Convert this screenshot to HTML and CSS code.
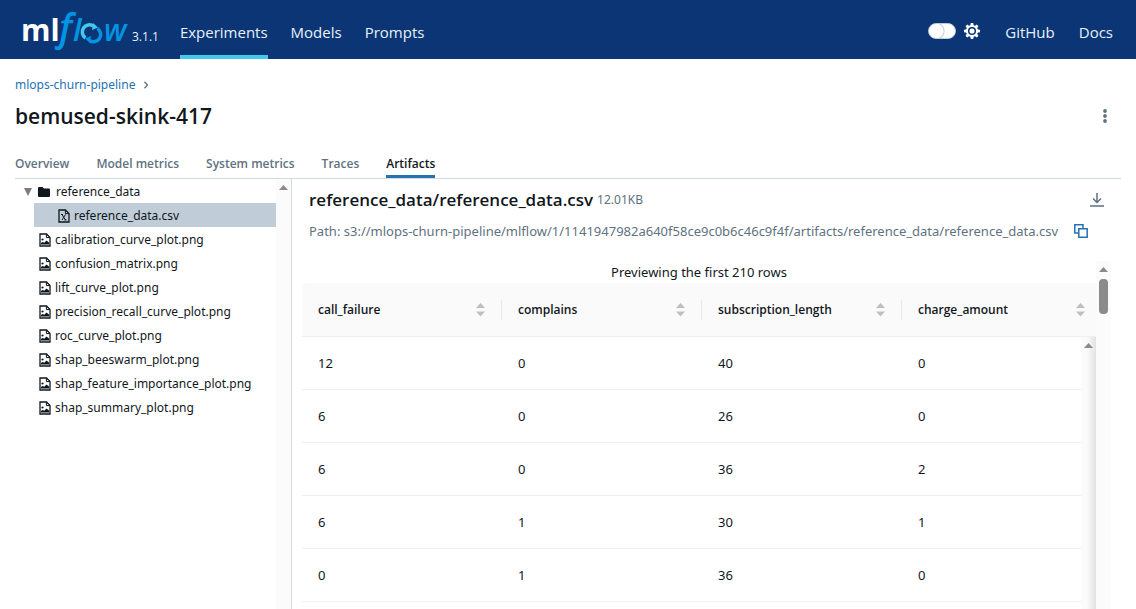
FILE: index.html
```html
<!DOCTYPE html>
<html lang="en">
<head>
<meta charset="utf-8">
<meta name="viewport" content="width=device-width, initial-scale=1">
<title>bemused-skink-417 - MLflow</title>
<link rel="stylesheet" href="styles.css">
</head>
<body>
<svg class="defs" aria-hidden="true">
  <symbol id="image-file" viewBox="0 0 12 14">
    <path d="M1 1h6.500L11 4.500V13H1z" fill="none" stroke="currentColor" stroke-width="1.300"/>
    <path d="M7.400 1v3.600h3.600" fill="none" stroke="currentColor"/>
    <path d="M2 11.500V9.800l2-.8 1.200.8L7.500 7.500 10 9.500v2z" fill="currentColor"/>
    <circle cx="3.500" cy="6.500" r="1.100" fill="currentColor"/>
  </symbol>
  <symbol id="sorter" viewBox="0 0 9 14">
    <path d="M4.500 0 9 5H0zM4.500 13.500 0 8.500h9z" fill="#bfbfbf"/>
  </symbol>
  <symbol id="scroll-up" viewBox="0 0 9 5">
    <path d="M4.500 0 9 5H0z" fill="#8b8b8b"/>
  </symbol>
</svg>
<div class="app">
  <header class="topbar">
    <a class="brand" href="#" aria-label="mlflow">
      <svg class="logo" viewBox="0 0 106 48">
        <text class="logo-ml" x="-2" y="35">ml</text>
        <text class="logo-flow logo-f" x="36" y="35">f</text>
        <text class="logo-flow" x="50" y="35">l</text>
        <text class="logo-flow logo-w" x="81" y="35">w</text>
        <g fill="none" stroke-width="3.500">
          <path d="M62.500 32a7 7 0 0 1 8-12" stroke="#43c9ed"/>
          <path d="M74.500 22.500a7 7 0 0 1-8 12" stroke="#0194e2"/>
        </g>
        <path d="m70 17 5 4.500-6 2.500z" fill="#43c9ed"/>
        <path d="m67 37-5-4.500 6-2.500z" fill="#0194e2"/>
      </svg>
    </a>
    <span class="version">3.1.1</span>
    <nav class="nav">
      <a class="active" href="#">Experiments</a>
      <a href="#">Models</a>
      <a href="#">Prompts</a>
    </nav>
    <div class="theme">
      <input type="checkbox" class="switch" id="theme" aria-label="Dark theme">
      <label for="theme"><svg class="gear" viewBox="0 0 16 16">
        <g fill="#fff">
          <circle cx="8" cy="8" r="6"/>
          <g id="teeth"><path d="M6.800 0h2.400l.6 3H6.200zM6.800 16h2.400l.6-3H6.200z"/></g>
          <use href="#teeth" transform="rotate(45 8 8)"/>
          <use href="#teeth" transform="rotate(90 8 8)"/>
          <use href="#teeth" transform="rotate(135 8 8)"/>
        </g>
        <circle cx="8" cy="8" r="3.300" fill="#fff" stroke="#0b3574" stroke-width="1.500"/>
      </svg></label>
    </div>
    <nav class="links"><a href="#">GitHub</a><a href="#">Docs</a></nav>
  </header>
  <main class="page">
    <nav class="crumbs"><a href="#">mlops-churn-pipeline</a>
      <svg width="6" height="8" viewBox="0 0 6 8"><path d="m1.500.8 3 3.200-3 3.200" fill="none" stroke="#5f7281" stroke-width="1.300"/></svg>
    </nav>
    <div class="heading">
      <h1>bemused-skink-417</h1>
      <button class="icon-button" aria-label="More"><svg width="4" height="14" viewBox="0 0 4 14" fill="#5f7281"><circle cx="2" cy="2" r="1.900"/><circle cx="2" cy="7" r="1.900"/><circle cx="2" cy="12" r="1.900"/></svg></button>
    </div>
    <nav class="tabs">
      <a href="#">Overview</a><a href="#">Model metrics</a><a href="#">System metrics</a><a href="#">Traces</a><a class="active" href="#">Artifacts</a>
    </nav>
    <div class="artifacts">
      <aside class="side">
        <ul class="tree">
          <li class="folder"><svg width="8" height="8" viewBox="0 0 8 8"><path d="M0 0h8L4 8z" fill="#7c7c7c"/></svg><svg width="12" height="10" viewBox="0 0 12 10"><path d="M0 1q0-1 1-1h3.500L6 1.500h5q1 0 1 1V9q0 1-1 1H1q-1 0-1-1z" fill="#11171c"/></svg>reference_data</li>
          <li class="child"><svg width="12" height="14" viewBox="0 0 12 14" fill="none" stroke="currentColor"><path d="M1 1h6.500L11 4.500V13H1z" stroke-width="1.300"/><path d="M7.400 1v3.600H11"/><path d="m4 5.500 3.500 5.500M7.500 5.500 4 11M3 5.500h2M6.500 11h2"/></svg>reference_data.csv</li>
          <li><svg class="file"><use href="#image-file"/></svg>calibration_curve_plot.png</li>
          <li><svg class="file"><use href="#image-file"/></svg>confusion_matrix.png</li>
          <li><svg class="file"><use href="#image-file"/></svg>lift_curve_plot.png</li>
          <li><svg class="file"><use href="#image-file"/></svg>precision_recall_curve_plot.png</li>
          <li><svg class="file"><use href="#image-file"/></svg>roc_curve_plot.png</li>
          <li><svg class="file"><use href="#image-file"/></svg>shap_beeswarm_plot.png</li>
          <li><svg class="file"><use href="#image-file"/></svg>shap_feature_importance_plot.png</li>
          <li><svg class="file"><use href="#image-file"/></svg>shap_summary_plot.png</li>
        </ul>
        <div class="scrollbar"><svg class="arrow"><use href="#scroll-up"/></svg></div>
      </aside>
      <section class="viewer">
        <div class="file-title">
          <h2>reference_data/reference_data.csv</h2>
          <span class="size">12.01KB</span>
          <button class="icon-button" aria-label="Download"><svg width="14" height="14" viewBox="0 0 14 14" fill="none" stroke="#5f7281" stroke-width="1.500"><path d="M7 0v9M3 5.500l4 4 4-4M0 13h14"/></svg></button>
        </div>
        <div class="path">
          <span>Path: s3://mlops-churn-pipeline/mlflow/1/1141947982a640f58ce9c0b6c46c9f4f/artifacts/reference_data/reference_data.csv</span>
          <button class="icon-button" aria-label="Copy path"><svg width="14" height="14" viewBox="0 0 14 14" fill="none" stroke="#2272b4" stroke-width="1.500"><path d="M4 9H.8V.8H9V4M4.800 4.800h8.400v8.400H4.800z"/></svg></button>
        </div>
        <div class="preview">
          <div class="preview-body">
            <p>Previewing the first 210 rows</p>
            <table>
              <colgroup><col class="col"><col class="col"><col class="col"><col><col class="col-bar"></colgroup>
              <thead>
                <tr>
                  <th><div>call_failure<svg class="sort"><use href="#sorter"/></svg></div></th>
                  <th><div>complains<svg class="sort"><use href="#sorter"/></svg></div></th>
                  <th><div>subscription_length<svg class="sort"><use href="#sorter"/></svg></div></th>
                  <th colspan="2"><div>charge_amount<svg class="sort"><use href="#sorter"/></svg></div></th>
                </tr>
              </thead>
              <tbody>
                <tr><td>12</td><td>0</td><td>40</td><td>0</td><td class="bar" rowspan="6"><svg class="arrow"><use href="#scroll-up"/></svg></td></tr>
                <tr><td>6</td><td>0</td><td>26</td><td>0</td></tr>
                <tr><td>6</td><td>0</td><td>36</td><td>2</td></tr>
                <tr><td>6</td><td>1</td><td>30</td><td>1</td></tr>
                <tr><td>0</td><td>1</td><td>36</td><td>0</td></tr>
                <tr><td></td><td></td><td></td><td></td></tr>
              </tbody>
            </table>
          </div>
          <div class="scrollbar"><svg class="arrow"><use href="#scroll-up"/></svg><div class="thumb"></div></div>
        </div>
      </section>
    </div>
  </main>
</div>
</body>
</html>
```
FILE: styles.css
```css
* { box-sizing: border-box; }
body {
  margin: 0;
  font: 13px/20px "Noto Sans", "Open Sans", sans-serif;
  color: #11171c;
  background: #fff;
}
h1, h2, p, ul { margin: 0; padding: 0; }
a { color: inherit; text-decoration: none; }
svg { display: block; flex: none; }
.defs { position: absolute; width: 0; height: 0; }
.app { height: 100vh; display: flex; flex-direction: column; overflow: hidden; }

.topbar {
  flex: none;
  height: 59px;
  display: flex;
  align-items: center;
  padding: 0 23px;
  background: #0b3574;
  color: #e7f1fb;
  font-family: "Open Sans", sans-serif;
  font-size: 15px;
}
.logo { width: 106px; height: 48px; overflow: visible; }
.logo-ml { font: 700 30px "Open Sans", sans-serif; fill: #fff; }
.logo-flow { font: italic 600 31px "Open Sans", sans-serif; fill: #0194e2; }
.logo-f { font-size: 38px; }
.logo-w { font-size: 30px; }
.version { margin: 14px 0 0 3px; font-size: 12px; line-height: 16px; }
.nav { display: flex; align-self: stretch; gap: 23px; margin-left: 21px; }
.nav a { display: flex; align-items: center; padding-top: 8px; border-bottom: 4px solid transparent; }
.nav .active { border-color: #43c9ed; }
.theme { margin-left: auto; display: flex; align-items: center; gap: 8px; padding-top: 3px; }
.gear { width: 16px; height: 16px; }
.switch {
  appearance: none;
  margin: 0;
  width: 28px;
  height: 16px;
  border-radius: 8px;
  border: 1px solid #c0cdd8;
  background: radial-gradient(circle at 7px 7px, #fff 7px, #c0cdd8 8px, #fff 9px);
}
.links { display: flex; gap: 24px; margin-left: 25px; padding-top: 4px; }

.page { flex: 1; min-height: 0; display: flex; flex-direction: column; padding: 16px 15px 0; }
.crumbs { display: flex; align-items: center; gap: 8px; color: #2272b4; }
.crumbs a { font-size: 12px; }
.heading { display: flex; align-items: center; justify-content: space-between; padding: 5px 14px 0 0; }
h1 { font: 600 21px/32px "Open Sans", sans-serif; }
.icon-button { display: flex; padding: 0; border: 0; background: none; }
.tabs {
  flex: none;
  display: flex;
  gap: 27px;
  margin-top: 22px;
  border-bottom: 1px solid #d1d9e1;
  color: #5f7281;
  font: 600 12px/20px "Open Sans", sans-serif;
}
.tabs a { padding-bottom: 1px; border-bottom: 3px solid transparent; }
.tabs .active { color: #11171c; border-color: #2272b4; }

.artifacts { flex: 1; min-height: 0; display: grid; grid-template-columns: 277px minmax(0, 1fr); }
.side { display: flex; border-right: 1px solid #d1d9e1; }
.tree { flex: 1; min-width: 0; list-style: none; font-size: 12px; }
.tree li { display: flex; align-items: center; gap: 4px; height: 24px; padding: 2px 0 0 24px; white-space: nowrap; }
.tree .folder { padding-left: 9px; gap: 6px; }
.tree .child { margin-left: 19px; background: #c0cdd8; }
.file { width: 12px; height: 14px; }
.scrollbar { flex: none; width: 15px; padding-top: 6px; background: #fbfbfb; }
.arrow { width: 9px; height: 5px; margin: 0 auto; }
.thumb { width: 9px; height: 35px; margin: 7px auto 0; border-radius: 4px; background: #8b8b8b; }

.viewer { min-width: 0; display: flex; flex-direction: column; padding: 9px 10px 0; }
.file-title { display: flex; align-items: center; gap: 4px; padding: 0 7px; }
.file-title .icon-button { margin-left: auto; }
h2 { font: 600 17px/24px "Open Sans", sans-serif; }
.size { font-size: 12px; color: #5f7281; }
.path { display: flex; align-items: center; gap: 16px; padding: 9px 7px 0; color: #5f7281; white-space: nowrap; }
.preview { flex: 1; min-height: 0; display: flex; margin-top: 20px; overflow: hidden; }
.preview-body { flex: 1; min-width: 0; }
.preview p { text-align: center; line-height: 22px; }
table { width: 100%; table-layout: fixed; border-collapse: separate; border-spacing: 0; }
.col { width: 200px; }
.col-bar { width: 15px; }
th, td { height: 53px; padding: 0 16px; text-align: left; border-bottom: 1px solid #f0f0f0; }
th {
  height: 54px;
  padding: 1px 0 0 16px;
  font: 600 12px/20px "Open Sans", sans-serif;
  background: #fafafa;
}
th div { display: flex; align-items: center; justify-content: space-between; height: 20px; padding-right: 16px; border-right: 1px solid #e8e8e8; }
th:last-child div { border-right: 0; padding-right: 11px; }
th:first-child { border-top-left-radius: 4px; }
.sort { width: 9px; height: 14px; }
.bar {
  padding: 6px 0 0;
  vertical-align: top;
  background: linear-gradient(90deg, #fbfbfb 40%, #e2e2e2);
}
```
